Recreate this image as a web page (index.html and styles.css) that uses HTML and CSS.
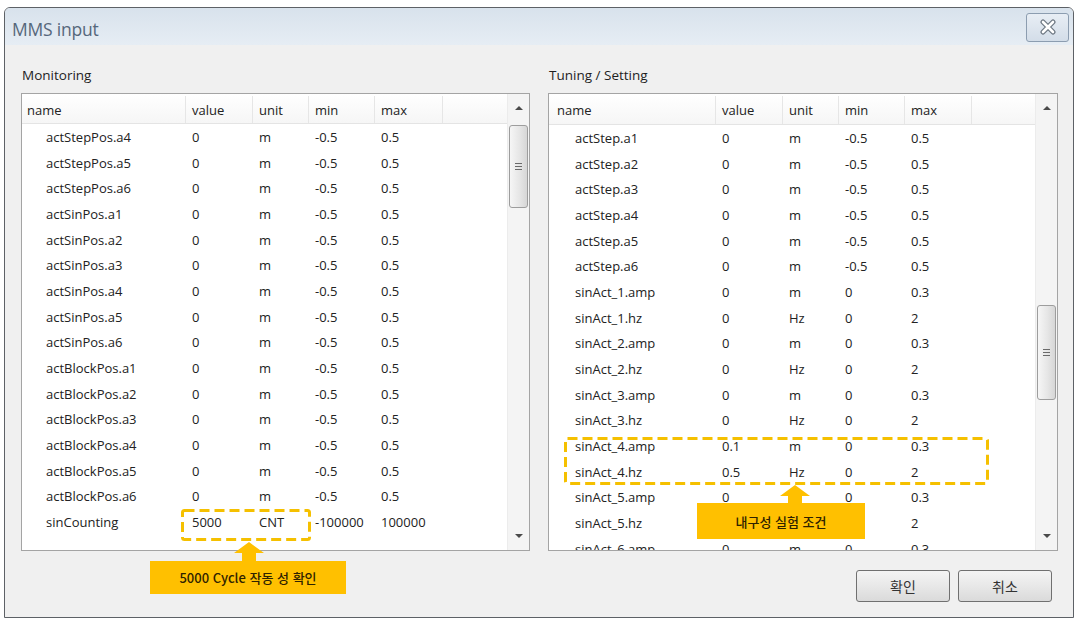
FILE: index.html
```html
<!DOCTYPE html>
<html lang="ko">
<head>
<meta charset="utf-8">
<title>MMS input</title>
<link rel="stylesheet" href="styles.css">
</head>
<body>
<div class="window">
  <div class="titlebar">
    <span class="title">MMS input</span>
    <button class="close" aria-label="close">
      <svg width="16" height="16" viewBox="0 0 16 16">
        <path d="M3 3 L13 13 M13 3 L3 13" stroke="#6d7782" stroke-width="5" stroke-linecap="round"/>
        <path d="M3 3 L13 13 M13 3 L3 13" stroke="#ffffff" stroke-width="2.6" stroke-linecap="round"/>
      </svg>
    </button>
  </div>
  <div class="main">
    <div class="panes">
      <section class="pane">
        <div class="pane-label">Monitoring</div>
        <div class="table-box">
          <div class="tbl">
            <div class="row thead"><span>name</span><span>value</span><span>unit</span><span>min</span><span>max</span><span></span></div>
            <div class="tbody">
              <div class="row"><span>actStepPos.a4</span><span>0</span><span>m</span><span>-0.5</span><span>0.5</span></div>
              <div class="row"><span>actStepPos.a5</span><span>0</span><span>m</span><span>-0.5</span><span>0.5</span></div>
              <div class="row"><span>actStepPos.a6</span><span>0</span><span>m</span><span>-0.5</span><span>0.5</span></div>
              <div class="row"><span>actSinPos.a1</span><span>0</span><span>m</span><span>-0.5</span><span>0.5</span></div>
              <div class="row"><span>actSinPos.a2</span><span>0</span><span>m</span><span>-0.5</span><span>0.5</span></div>
              <div class="row"><span>actSinPos.a3</span><span>0</span><span>m</span><span>-0.5</span><span>0.5</span></div>
              <div class="row"><span>actSinPos.a4</span><span>0</span><span>m</span><span>-0.5</span><span>0.5</span></div>
              <div class="row"><span>actSinPos.a5</span><span>0</span><span>m</span><span>-0.5</span><span>0.5</span></div>
              <div class="row"><span>actSinPos.a6</span><span>0</span><span>m</span><span>-0.5</span><span>0.5</span></div>
              <div class="row"><span>actBlockPos.a1</span><span>0</span><span>m</span><span>-0.5</span><span>0.5</span></div>
              <div class="row"><span>actBlockPos.a2</span><span>0</span><span>m</span><span>-0.5</span><span>0.5</span></div>
              <div class="row"><span>actBlockPos.a3</span><span>0</span><span>m</span><span>-0.5</span><span>0.5</span></div>
              <div class="row"><span>actBlockPos.a4</span><span>0</span><span>m</span><span>-0.5</span><span>0.5</span></div>
              <div class="row"><span>actBlockPos.a5</span><span>0</span><span>m</span><span>-0.5</span><span>0.5</span></div>
              <div class="row"><span>actBlockPos.a6</span><span>0</span><span>m</span><span>-0.5</span><span>0.5</span></div>
              <div class="row"><span>sinCounting</span><span>5000</span><span>CNT</span><span>-100000</span><span>100000</span></div>
            </div>
          </div>
          <div class="scrollbar">
            <div class="arrow"><i class="tri-up"></i></div>
            <div class="thumb thumb-left"><i class="grip"></i></div>
            <div class="track-fill"></div>
            <div class="arrow"><i class="tri-down"></i></div>
          </div>
        </div>
      </section>
      <section class="pane pane-right">
        <div class="pane-label">Tuning / Setting</div>
        <div class="table-box">
          <div class="tbl">
            <div class="row thead"><span>name</span><span>value</span><span>unit</span><span>min</span><span>max</span><span></span></div>
            <div class="tbody">
              <div class="row"><span>actStep.a1</span><span>0</span><span>m</span><span>-0.5</span><span>0.5</span></div>
              <div class="row"><span>actStep.a2</span><span>0</span><span>m</span><span>-0.5</span><span>0.5</span></div>
              <div class="row"><span>actStep.a3</span><span>0</span><span>m</span><span>-0.5</span><span>0.5</span></div>
              <div class="row"><span>actStep.a4</span><span>0</span><span>m</span><span>-0.5</span><span>0.5</span></div>
              <div class="row"><span>actStep.a5</span><span>0</span><span>m</span><span>-0.5</span><span>0.5</span></div>
              <div class="row"><span>actStep.a6</span><span>0</span><span>m</span><span>-0.5</span><span>0.5</span></div>
              <div class="row"><span>sinAct_1.amp</span><span>0</span><span>m</span><span>0</span><span>0.3</span></div>
              <div class="row"><span>sinAct_1.hz</span><span>0</span><span>Hz</span><span>0</span><span>2</span></div>
              <div class="row"><span>sinAct_2.amp</span><span>0</span><span>m</span><span>0</span><span>0.3</span></div>
              <div class="row"><span>sinAct_2.hz</span><span>0</span><span>Hz</span><span>0</span><span>2</span></div>
              <div class="row"><span>sinAct_3.amp</span><span>0</span><span>m</span><span>0</span><span>0.3</span></div>
              <div class="row"><span>sinAct_3.hz</span><span>0</span><span>Hz</span><span>0</span><span>2</span></div>
              <div class="row"><span>sinAct_4.amp</span><span>0.1</span><span>m</span><span>0</span><span>0.3</span></div>
              <div class="row"><span>sinAct_4.hz</span><span>0.5</span><span>Hz</span><span>0</span><span>2</span></div>
              <div class="row"><span>sinAct_5.amp</span><span>0</span><span>m</span><span>0</span><span>0.3</span></div>
              <div class="row"><span>sinAct_5.hz</span><span>0</span><span>Hz</span><span>0</span><span>2</span></div>
              <div class="row"><span>sinAct_6.amp</span><span>0</span><span>m</span><span>0</span><span>0.3</span></div>
            </div>
          </div>
          <div class="scrollbar">
            <div class="arrow"><i class="tri-up"></i></div>
            <div class="thumb thumb-right"><i class="grip"></i></div>
            <div class="track-fill"></div>
            <div class="arrow"><i class="tri-down"></i></div>
          </div>
        </div>
      </section>
    </div>
    <div class="buttons">
      <button class="btn">확인</button>
      <button class="btn">취소</button>
    </div>
  </div>
</div>

<div class="dash-box dash-left">
  <svg width="100%" height="100%"><rect x="1.5" y="1.5" width="calc(100% - 3px)" height="calc(100% - 3px)" rx="2" fill="none" stroke="#f5c000" stroke-width="3" stroke-dasharray="10 5"/></svg>
</div>
<div class="dash-box dash-right">
  <svg width="100%" height="100%"><rect x="1.5" y="1.5" width="calc(100% - 3px)" height="calc(100% - 3px)" rx="2" fill="none" stroke="#f5c000" stroke-width="3" stroke-dasharray="10 5"/></svg>
</div>

<svg class="up-arrow arrow-left" width="30" height="19" viewBox="0 0 30 19"><polygon points="15,0 30,11 22,11 22,19 8,19 8,11 0,11" fill="#ffc000"/></svg>
<svg class="up-arrow arrow-right" width="30" height="18" viewBox="0 0 30 18"><polygon points="15,0 30,11 22,11 22,18 8,18 8,11 0,11" fill="#ffc000"/></svg>

<div class="callout callout-left">5000 Cycle 작동 성 확인</div>
<div class="callout callout-right">내구성 실험 조건</div>
</body>
</html>
```

FILE: styles.css
```css
* { box-sizing: border-box; }

body {
  margin: 0;
  background: #ffffff;
  position: relative;
  width: 1080px;
  height: 624px;
  overflow: hidden;
  font-family: "Open Sans", "Noto Sans CJK KR", sans-serif;
  color: #222;
}

.window {
  width: 1070px;
  height: 611px;
  margin: 7px 0 0 4px;
  border: 1px solid #5d6166;
  border-radius: 6px 6px 0 0;
  background: #f0f0f0;
  display: flex;
  flex-direction: column;
  overflow: hidden;
}

.titlebar {
  height: 37px;
  flex: none;
  background: linear-gradient(#d8e2ec, #e6edf4);
  display: flex;
  align-items: center;
  justify-content: space-between;
  padding: 4px 4px 0 7px;
}

.title {
  font-size: 17.5px;
  color: #56677b;
  letter-spacing: -0.2px;
}

.close {
  width: 43px;
  height: 29px;
  margin-top: -3px;
  border: 1px solid #8c9db0;
  border-radius: 3px;
  background: linear-gradient(#e8eef5, #d3dde8);
  display: flex;
  align-items: center;
  justify-content: center;
  padding: 0;
}

.main {
  flex: 1;
  display: flex;
  flex-direction: column;
  padding: 0 15px 0 16px;
}

.panes {
  display: grid;
  grid-template-columns: 509px 510px;
  column-gap: 18px;
}

.pane-label {
  height: 48px;
  padding-top: 12px;
  padding-left: 1px;
  display: flex;
  align-items: center;
  font-size: 13.5px;
  color: #1e1e1e;
}

.table-box {
  height: 458px;
  border: 1px solid #a4a4a4;
  background: #fff;
  display: flex;
}

.tbl {
  flex: 1;
  display: flex;
  flex-direction: column;
  overflow: hidden;
}

.row {
  display: grid;
  grid-template-columns: 164px 67px 56px 66px 68px 1fr;
  height: 25.7px;
  align-items: center;
  font-size: 13px;
  white-space: nowrap;
}

.pane-right .row {
  grid-template-columns: 167px 67px 56px 66px 67px 1fr;
}

.row span {
  padding-left: 6px;
}

.tbody .row span:first-child {
  padding-left: 24px;
}

.pane-right .tbody .row span:first-child {
  padding-left: 26px;
}

.thead {
  height: 30px;
  flex: none;
  background: linear-gradient(#ffffff, #f6f6f6);
  border-bottom: 1px solid #e4e4e4;
  padding-top: 2px;
}

.thead span {
  height: 100%;
  display: flex;
  align-items: center;
  border-right: 1px solid #e6e6e6;
}

.thead span:last-child { border-right: none; }

.thead span:first-child { padding-left: 5px; }
.pane-right .thead span:first-child { padding-left: 8px; }

.tbody {
  flex: 1;
  overflow: hidden;
}

.pane-right .thead { height: 31px; }

.scrollbar {
  width: 22px;
  flex: none;
  background: #f4f4f4;
  border-left: 1px solid #ececec;
  display: flex;
  flex-direction: column;
  align-items: center;
}

.arrow {
  height: 28px;
  width: 100%;
  flex: none;
  display: flex;
  align-items: center;
  justify-content: center;
}

.tri-up {
  width: 0; height: 0;
  border-left: 4px solid transparent;
  border-right: 4px solid transparent;
  border-bottom: 4px solid #4a4a4a;
}

.tri-down {
  width: 0; height: 0;
  border-left: 4px solid transparent;
  border-right: 4px solid transparent;
  border-top: 4px solid #4a4a4a;
}

.thumb {
  width: 19px;
  flex: none;
  border: 1px solid #9d9d9d;
  border-radius: 3px;
  background: linear-gradient(90deg, #f6f6f6, #e6e6e6 55%, #d6d6d6);
  display: flex;
  align-items: center;
  justify-content: center;
}

.thumb-left { margin-top: 3px; height: 83px; }
.thumb-right { margin-top: 183px; height: 95px; }

.grip {
  width: 7px;
  height: 7px;
  border-top: 1px solid #6a6a6a;
  border-bottom: 1px solid #6a6a6a;
  position: relative;
}

.grip::after {
  content: "";
  position: absolute;
  left: 0; right: 0; top: 2px;
  border-top: 1px solid #6a6a6a;
}

.track-fill { flex: 1; }

.buttons {
  display: flex;
  justify-content: flex-end;
  gap: 8px;
  margin-top: 19px;
  padding-right: 6px;
}

.btn {
  width: 94px;
  height: 32px;
  border: 1px solid #707070;
  border-radius: 3px;
  background: linear-gradient(#f4f4f4, #e8e8e8 50%, #dadada);
  font-family: "Noto Sans CJK KR", sans-serif;
  font-size: 14px;
  color: #333;
  padding: 0;
}

/* Annotations drawn over the screenshot */
.dash-box {
  position: absolute;
}

.dash-box svg { display: block; }

.dash-left { left: 181px; top: 509px; width: 130px; height: 32px; }
.dash-right { left: 564px; top: 437px; width: 425px; height: 48px; }

.up-arrow { position: absolute; display: block; }
.arrow-left { left: 234px; top: 542px; }
.arrow-right { left: 780px; top: 485px; }

.callout {
  position: absolute;
  background: #ffc000;
  display: flex;
  align-items: center;
  justify-content: center;
  font-family: "Noto Sans CJK KR", sans-serif;
  font-weight: 500;
  font-size: 13px;
  color: #2e2200;
}

.callout-left { left: 150px; top: 561px; width: 196px; height: 33px; }
.callout-right { left: 697px; top: 503px; width: 168px; height: 36px; }
```
